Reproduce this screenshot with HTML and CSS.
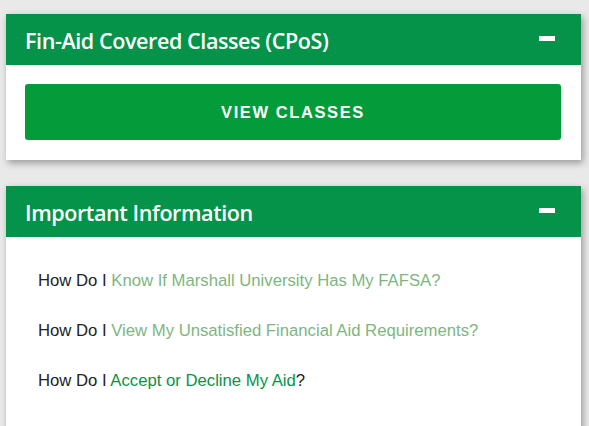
FILE: index.html
```html
<!DOCTYPE html>
<html lang="en">
<head>
<meta charset="utf-8">
<title>Financial Aid</title>
<link rel="stylesheet" href="styles.css">
</head>
<body>
<div class="page">
  <section class="card">
    <div class="card-header">
      <h2 class="card-title">Fin-Aid Covered Classes (CPoS)</h2>
      <span class="toggle" aria-hidden="true"></span>
    </div>
    <div class="card-body card-body-btn">
      <a class="btn" href="#">VIEW CLASSES</a>
    </div>
  </section>
  <section class="card">
    <div class="card-header">
      <h2 class="card-title">Important Information</h2>
      <span class="toggle" aria-hidden="true"></span>
    </div>
    <div class="card-body card-body-list">
      <p class="item">How Do I <a class="link" href="#">Know If Marshall University Has My FAFSA?</a></p>
      <p class="item">How Do I <a class="link" href="#">View My Unsatisfied Financial Aid Requirements?</a></p>
      <p class="item">How Do I <a class="link link-dark" href="#">Accept or Decline My Aid</a>?</p>
    </div>
  </section>
</div>
</body>
</html>
```
FILE: styles.css
```css
html, body {
  margin: 0;
  padding: 0;
  background: #e9e9e9;
  overflow: hidden;
}
.page {
  display: flex;
  flex-direction: column;
  gap: 26px;
  padding: 14px 8px 0 6px;
}
.card {
  background: #fff;
  box-shadow: 2px 3px 7px rgba(0,0,0,0.35);
}
.card-header {
  height: 51px;
  box-sizing: border-box;
  background: #05934a;
  display: flex;
  align-items: center;
  justify-content: space-between;
  padding: 3px 26px 0 19px;
}
.card-title {
  margin: 0;
  color: #fff;
  font-family: "Open Sans", sans-serif;
  font-weight: 600;
  font-size: 21.5px;
  letter-spacing: -0.4px;
  line-height: 1;
}
.toggle {
  width: 16px;
  height: 5px;
  background: #fff;
  margin-top: -6px;
}
.card-body-btn {
  padding: 19px 20px 20px 19px;
}
.btn {
  display: flex;
  align-items: center;
  justify-content: center;
  height: 56px;
  background: #049c3a;
  border-radius: 3px;
  color: #fff;
  text-decoration: none;
  font-family: "Liberation Sans", Arial, sans-serif;
  font-weight: 700;
  font-size: 16.5px;
  letter-spacing: 1.6px;
}
.card-body-list {
  padding: 34px 20px 40px 32px;
  display: flex;
  flex-direction: column;
  gap: 30px;
}
.item {
  margin: 0;
  font-family: "Liberation Sans", Arial, sans-serif;
  font-size: 16.7px;
  line-height: 20px;
  color: #222;
}
.link {
  color: #7db67f;
  text-decoration: none;
}
.link-dark {
  color: #079447;
}
```
